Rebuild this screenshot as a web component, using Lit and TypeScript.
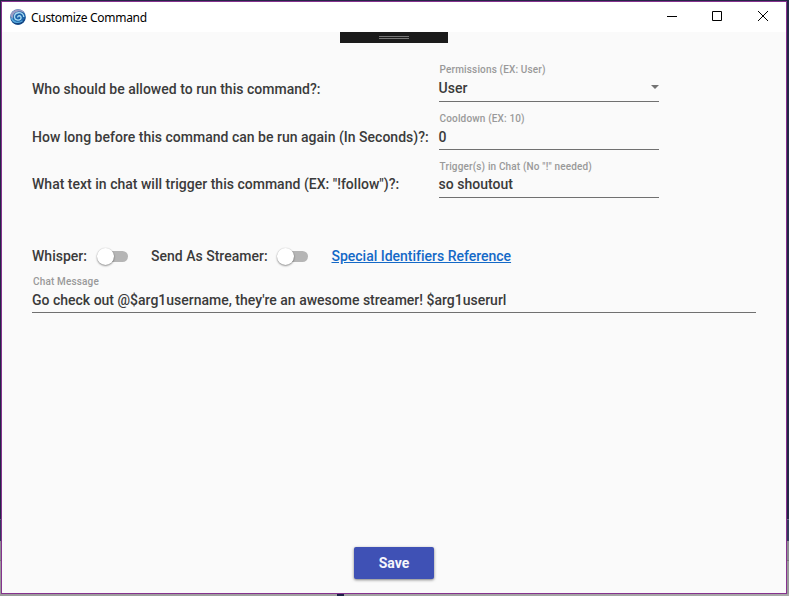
import { LitElement, html, css, svg } from "lit";
import { customElement, property } from "lit/decorators.js";

@customElement("text-field")
class TextField extends LitElement {
  @property() label = "";
  @property() value = "";
  @property({ type: Boolean }) dropdown = false;

  static styles = css`
    :host { display: flex; flex-direction: column; height: 40px; border-bottom: 1px solid #707070; }
    .hint { height: 16px; margin-top: var(--hint-shift, 0px); font: 500 10px/16px Roboto, sans-serif; letter-spacing: 0.15px; color: #999; padding-left: 1px; white-space: nowrap; }
    .row { display: flex; align-items: center; justify-content: space-between; height: 20px; margin-top: var(--value-shift, 0px); }
    .value { font: 500 14px/20px Roboto, sans-serif; color: #3b3b3b; white-space: nowrap; }
    .arrow { display: block; margin-top: -3px; }
  `;

  render() {
    return html`
      <div class="hint">${this.label}</div>
      <div class="row">
        <span class="value">${this.value}</span>
        ${this.dropdown
          ? html`<svg class="arrow" width="8" height="4" viewBox="0 0 8 4"><path d="M0 0H8L4 4Z" fill="#737373" /></svg>`
          : null}
      </div>
    `;
  }
}

@customElement("toggle-switch")
class ToggleSwitch extends LitElement {
  static styles = css`
    :host { display: flex; align-items: center; width: 32px; height: 18px; }
    .track { display: flex; align-items: center; width: 28px; height: 11px; margin-left: 4.500px; border-radius: 6px; background: #b5b5b5; }
    .thumb { flex: none; width: 17px; height: 17px; margin-left: -3.700px; border-radius: 50%; background: #fff; box-shadow: 0 1px 2px rgba(0, 0, 0, 0.42), 0 0 1px rgba(0, 0, 0, 0.2); }
  `;

  render() {
    return html`<div class="track"><div class="thumb"></div></div>`;
  }
}

const swirl = svg`
  <circle cx="8" cy="8" r="7.8" fill="#1d62a8" />
  <path d="M.4 6C1.500 2 6 .200 9.500 .500C12 .900 14 2.200 14.800 4C11.500 1.800 7 2 4.800 4C3 5.600 2.600 8 3.200 10C1.500 9 .6 8 .4 6Z" fill="#9a9dc4" />
  <path d="M1 10.500C3 14 7 14.600 10 13.600C13 12.500 15 10 15.300 7.500C16 12 12 15.800 8 15.700C4 15.500 1.800 13 1 10.500Z" fill="#14427e" />
  <path d="M13.800 8C13.500 5 11 3.500 8.500 3.700C5.500 4 4.200 6 4.500 8.300C4.900 11 8.500 12 10.500 10.200C12 8.500 10.500 6.700 9 6.800C8 6.900 7.700 7.500 7.600 8.500" fill="none" stroke="#a9dcf2" stroke-width="1.400" />
  <path d="M1.500 9C3 14 9 14.500 12.500 11.800" fill="none" stroke="#57a9dc" stroke-width="1.300" />
`;

@customElement("app-root")
class AppRoot extends LitElement {
  static styles = css`
    :host { display: block; width: 789px; height: 596px; overflow: hidden; }
    * { box-sizing: border-box; }
    .desktop {
      width: 789px; height: 596px; padding: 1px 2px 2px 1px;
      background:
        linear-gradient(#1d2146, #1d2146) 337px 594px / 7px 2px no-repeat,
        linear-gradient(90deg, #9c9c9c, #a8a8a8) 0 594px / 789px 2px no-repeat,
        linear-gradient(#242746 0 519px, #62677f 519px 520px, #343a5b 520px 541px, #8c8c91 541px 560px, #777 560px 561px, #999 561px);
    }
    .window { display: flex; flex-direction: column; width: 786px; height: 593px; border: 1px solid #86328f; background: #fafafa; }
    .titlebar { display: flex; align-items: center; flex: none; height: 30px; background: #fff; padding: 0 2px 0 8px; }
    .logo { display: block; width: 16px; height: 16px; margin-top: -1px; }
    .title { flex: 1; margin-left: 5px; padding-top: 1px; font: 12px/16px "Noto Sans", sans-serif; color: #000; letter-spacing: -0.31px; }
    .controls { display: block; }
    .handle { display: flex; flex-direction: column; align-items: center; justify-content: center; gap: 1px; flex: none; width: 108px; height: 11px; margin-left: 338px; background: #1b1b1b; }
    .grip { width: 30px; height: 1px; background: #777; }
    .form { display: grid; grid-template-columns: 406.600px 220.400px; grid-template-rows: 48px 48px 48px; margin: 19px 0 0 30px; }
    .text { font: 500 14px/20px Roboto, sans-serif; color: #3b3b3b; white-space: nowrap; letter-spacing: 0.012px; }
    .question { padding-top: 17px; }
    .last { padding-top: 16px; }
    .cooldown { --hint-shift: 1px; }
    .trigger { --hint-shift: 1px; --value-shift: -1px; }
    .options { display: flex; align-items: center; height: 20px; margin: 40px 0 0 30px; }
    .whisper { width: 64px; }
    .streamer { width: 125px; margin-left: 23px; }
    .link { margin-left: 23.500px; color: #1469c7; text-decoration: underline; letter-spacing: -0.010px; }
    .message { margin: 7px 30px 0; --hint-shift: 1px; }
    .footer { display: flex; justify-content: center; margin-top: auto; padding-bottom: 14px; }
    .save { width: 80px; height: 32px; padding: 0; border: 0; border-radius: 2px; background: #3f51b5; color: #f5f6fc; font: 700 14px/32px Roboto, sans-serif; box-shadow: 0 1px 3px rgba(0, 0, 0, 0.5); }
  `;

  render() {
    return html`
      <div class="desktop">
        <main class="window">
          <header class="titlebar">
            <svg class="logo" viewBox="0 0 16 16">${swirl}</svg>
            <span class="title">Customize Command</span>
            <svg class="controls" width="120" height="30" viewBox="0 0 120 30" fill="none" stroke="#000">
              <path d="M3 14.500H13M48.500 9.500H57.500V18.500H48.500Z" />
              <path d="M94 9L104 19M104 9L94 19" />
            </svg>
          </header>
          <div class="handle"><div class="grip"></div><div class="grip"></div></div>
          <section class="form">
            <div class="text question">Who should be allowed to run this command?:</div>
            <text-field label="Permissions (EX: User)" value="User" dropdown></text-field>
            <div class="text question">How long before this command can be run again (In Seconds)?:</div>
            <text-field class="cooldown" label="Cooldown (EX: 10)" value="0"></text-field>
            <div class="text last">What text in chat will trigger this command (EX: "!follow")?:</div>
            <text-field class="trigger" label='Trigger(s) in Chat (No "!" needed)' value="so shoutout"></text-field>
          </section>
          <section class="options">
            <span class="text whisper">Whisper:</span><toggle-switch></toggle-switch>
            <span class="text streamer">Send As Streamer:</span><toggle-switch></toggle-switch>
            <a class="text link">Special Identifiers Reference</a>
          </section>
          <text-field class="message" label="Chat Message" value="Go check out @$arg1username, they're an awesome streamer! $arg1userurl"></text-field>
          <footer class="footer"><button class="save">Save</button></footer>
        </main>
      </div>
    `;
  }
}
